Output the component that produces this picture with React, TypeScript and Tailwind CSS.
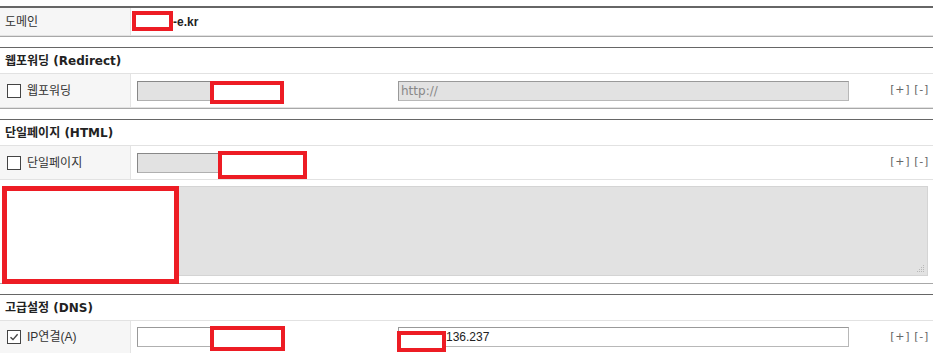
import React from "react";

const redBox = "absolute border-[#ed1c24] bg-white";
const head = "h-[26px] border-b border-[#e2e2e2] flex items-center pl-[5px] text-[12px] font-bold font-['DejaVu_Sans','Noto_Sans_CJK_KR',sans-serif]";

function Label({ children }: { children: React.ReactNode }) {
  return (
    <div className="w-[131px] shrink-0 bg-[#f6f6f6] border-r border-[#e4e4e4] flex items-center pl-[5px] text-[12px] text-[#333]">
      {children}
    </div>
  );
}

function Check({ checked = false }: { checked?: boolean }) {
  return (
    <span className="w-[14px] h-[14px] mr-[6px] ml-[2px] border border-[#444] bg-white flex items-center justify-center">
      {checked && (
        <svg width="10" height="10" viewBox="0 0 10 10">
          <path d="M1.5 5.2 L4 7.6 L8.6 2.2" fill="none" stroke="#444" strokeWidth="1.4" />
        </svg>
      )}
    </span>
  );
}

function PlusMinus() {
  return (
    <span className="ml-auto pr-[4px] text-[11px] tracking-[0.7px] text-[#666] font-['DejaVu_Sans',sans-serif] whitespace-pre">
      [+] [-]
    </span>
  );
}

export default function App() {
  return (
    <div className="w-[933px] h-[353px] overflow-hidden bg-white pt-[6px] text-[#222] font-['Liberation_Sans','Noto_Sans_CJK_KR',sans-serif]">

      {/* 도메인 */}
      <div className="border-t-2 border-t-[#666] border-b border-b-[#a8a8a8]">
        <div className="flex h-[28px] border-b border-[#e2e2e2]">
          <Label>도메인</Label>
          <div className="relative flex-1 flex items-center pl-[42px] text-[12px] font-bold">
            <div className={redBox + " left-[1px] top-[3px] w-[41px] h-[20px] border-[4px]"} />
            -e.kr
          </div>
        </div>
      </div>

      <div className="h-[10px]" />

      {/* 웹포워딩 */}
      <div className="border-t border-t-[#666] border-b border-b-[#a8a8a8]">
        <div className={head}>웹포워딩 (Redirect)</div>
        <div className="flex h-[34px] border-b border-[#e2e2e2]">
          <Label><Check />웹포워딩</Label>
          <div className="relative flex-1 flex items-center pl-[6px]">
            <div className="w-[140px] h-[20px] bg-[#e2e2e2] border border-[#b0b0b0] border-t-[#888] border-l-[#888]" />
            <div className={redBox + " left-[79px] top-[7px] w-[74px] h-[23px] border-[4px]"} />
            <div className="ml-[121px] w-[451px] h-[20px] bg-[#e2e2e2] border border-[#b8b8b8] border-t-[#999] border-l-[#999] flex items-center pl-[2px] text-[12px] text-[#888] font-['DejaVu_Sans',sans-serif]">
              http://
            </div>
            <PlusMinus />
          </div>
        </div>
      </div>

      <div className="h-[10px]" />

      {/* 단일페이지 */}
      <div className="border-t border-t-[#666] border-b border-b-[#a8a8a8]">
        <div className={head}>단일페이지 (HTML)</div>
        <div className="flex h-[34px] border-b border-[#e2e2e2]">
          <Label><Check />단일페이지</Label>
          <div className="relative flex-1 flex items-center pl-[6px]">
            <div className="w-[140px] h-[20px] bg-[#e2e2e2] border border-[#b0b0b0] border-t-[#888] border-l-[#888]" />
            <div className={redBox + " left-[87px] top-[5px] w-[89px] h-[28px] border-[4px]"} />
            <PlusMinus />
          </div>
        </div>
        <div className="relative pt-[6px] pb-[7px] px-[5px]">
          <div className="relative h-[90px] bg-[#e2e2e2] border border-[#d4d4d4]">
            <svg className="absolute right-[2px] bottom-[2px]" width="9" height="9" viewBox="0 0 9 9">
              <rect x="7" y="1" width="1" height="1" fill="#b8b8b8" />
              <rect x="5" y="3" width="1" height="1" fill="#b8b8b8" />
              <rect x="7" y="3" width="1" height="1" fill="#b8b8b8" />
              <rect x="3" y="5" width="1" height="1" fill="#b8b8b8" />
              <rect x="5" y="5" width="1" height="1" fill="#b8b8b8" />
              <rect x="7" y="5" width="1" height="1" fill="#b8b8b8" />
              <rect x="1" y="7" width="1" height="1" fill="#b8b8b8" />
              <rect x="3" y="7" width="1" height="1" fill="#b8b8b8" />
              <rect x="5" y="7" width="1" height="1" fill="#b8b8b8" />
              <rect x="7" y="7" width="1" height="1" fill="#b8b8b8" />
            </svg>
          </div>
          <div className={redBox + " left-[2px] top-[6px] w-[177px] h-[98px] border-[5px]"} />
        </div>
      </div>

      <div className="h-[10px]" />

      {/* 고급설정 */}
      <div className="border-t border-t-[#666] border-b border-b-[#a8a8a8]">
        <div className={head}>고급설정 (DNS)</div>
        <div className="flex h-[33px] border-b border-[#e2e2e2]">
          <Label><Check checked />IP연결(A)</Label>
          <div className="relative flex-1 flex items-center pl-[6px]">
            <div className="w-[140px] h-[20px] bg-white border border-[#b0b0b0] border-t-[#999] border-l-[#999]" />
            <div className={redBox + " left-[79px] top-[5px] w-[75px] h-[25px] border-[4px]"} />
            <div className="relative ml-[121px] w-[451px] h-[20px] bg-white border border-[#b8b8b8] border-t-[#999] border-l-[#999] flex items-center pl-[47px] text-[12px] text-[#222]">
              <div className={redBox + " left-[-2px] top-[3px] w-[49px] h-[21px] border-[4px]"} />
              136.237
            </div>
            <PlusMinus />
          </div>
        </div>
      </div>
    </div>
  );
}
